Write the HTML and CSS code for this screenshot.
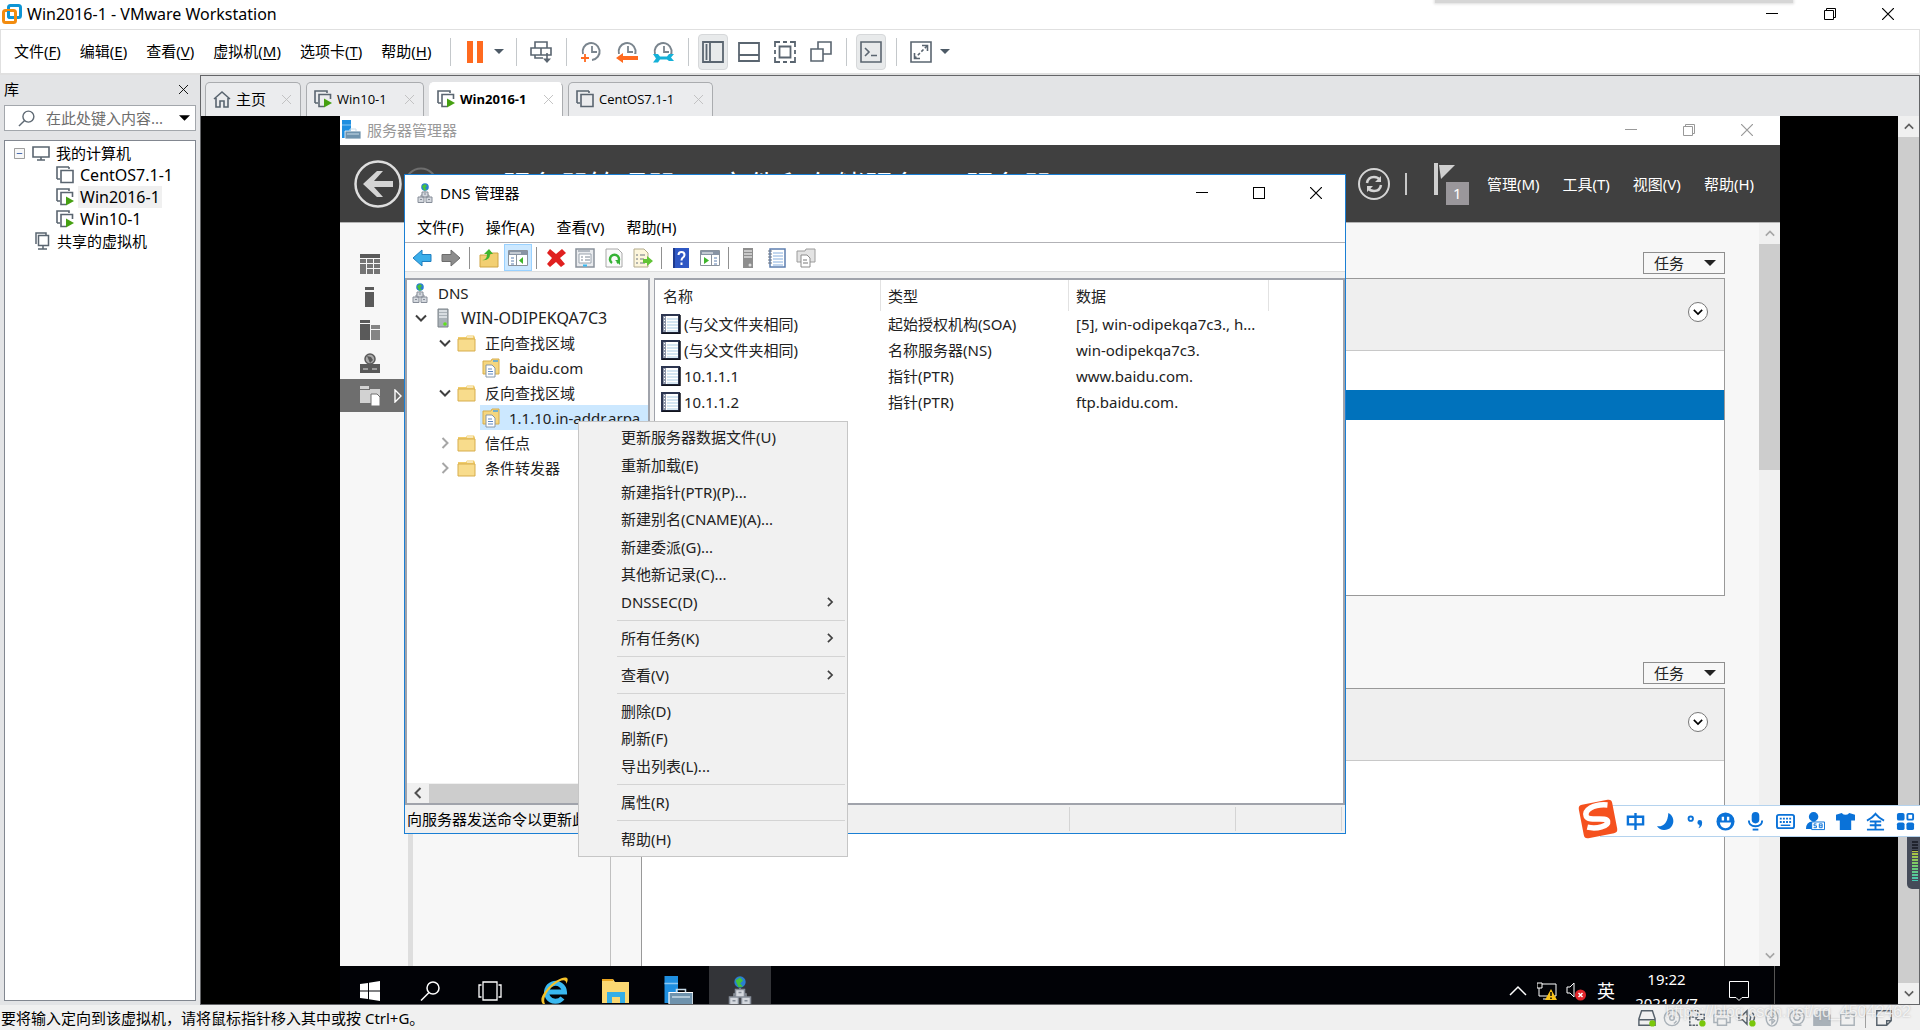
FILE: index.html
```html
<!DOCTYPE html>
<html lang="zh-CN">
<head>
<meta charset="utf-8">
<title>Win2016-1 - VMware Workstation</title>
<link rel="stylesheet" href="styles.css">
</head>
<body>
<svg class="sprite" aria-hidden="true">
  <defs>
    <symbol id="min" viewBox="0 0 12 12"><path d="M0 5.5h12" stroke="currentColor"/></symbol>
    <symbol id="max" viewBox="0 0 12 12"><rect x=".5" y=".5" width="11" height="11" fill="none" stroke="currentColor"/></symbol>
    <symbol id="restore" viewBox="0 0 12 12"><path d="M.5 2.5h9v9h-9zM2.500 2V.5h9v9H10" fill="none" stroke="currentColor"/></symbol>
    <symbol id="close" viewBox="0 0 12 12"><path d="M0 0l12 12M12 0L0 12" stroke="currentColor" stroke-width="1.200"/></symbol>
    <symbol id="down" viewBox="0 0 12 12"><path d="M1 3.500l5 5 5-5" fill="none" stroke="currentColor" stroke-width="2"/></symbol>
    <symbol id="up" viewBox="0 0 12 12"><path d="M1 8.500l5-5 5 5" fill="none" stroke="currentColor" stroke-width="2"/></symbol>
    <symbol id="left" viewBox="0 0 12 12"><path d="M8.500 1l-5 5 5 5" fill="none" stroke="currentColor" stroke-width="2"/></symbol>
    <symbol id="right" viewBox="0 0 12 12"><path d="M3.500 1l5 5-5 5" fill="none" stroke="currentColor" stroke-width="2"/></symbol>
    <symbol id="caret" viewBox="0 0 12 6"><path d="M0 0h12L6 6z" fill="currentColor"/></symbol>
    <symbol id="vm" viewBox="0 0 18 18"><path d="M1 13V1h12M1 13h3M13 1v2" fill="none" stroke="#5a6570" stroke-width="1.600"/><path d="M5 4.500h12v12H5z" fill="none" stroke="#5a6570" stroke-width="1.600"/></symbol>
    <symbol id="vmrun" viewBox="0 0 18 18"><path d="M1 13V1h12v2M1 13h3M10 16.500H5v-12h11.500V9" fill="none" stroke="#5a6570" stroke-width="1.600"/><path d="M10 8.500l8 4.500-8 4.500z" fill="#46a012"/></symbol>
    <symbol id="folder" viewBox="0 0 20 18"><path d="M1 3h8l1-1.500h7l1 2v13H1z" fill="#f1cd6b"/><path d="M1 5h17v12H1z" fill="#f8dc8c" stroke="#d7ad4c"/><path d="M10 3h6" stroke="#fff"/></symbol>
    <symbol id="zone" viewBox="0 0 20 20"><path d="M2 3h8l1-2h7v15H2z" fill="#f5d67f" stroke="#d7ad4c"/><path d="M12 3h5" stroke="#4aa3e0" stroke-width="1.500"/><path d="M5 7h6l3 3v9H5z" fill="#fff" stroke="#8797a8"/><path d="M7 11h4M7 13.500h5M7 16h5" stroke="#5c86c0"/></symbol>
    <symbol id="server" viewBox="0 0 12 20"><path d="M1 1h10v18H1z" fill="#aab2b8" stroke="#7a8288"/><path d="M2 3h8M2 6h8M2 9h8" stroke="#e8ecee" stroke-width="1.500"/><circle cx="8" cy="16" r="1.800" fill="#5fe01e"/></symbol>
    <symbol id="dns" viewBox="0 0 16 20"><circle cx="8" cy="4" r="3.800" fill="#2b7fd0"/><path d="M5 3l3-2 2 2-2 2 2 2-3 .5z" fill="#45c23a"/><path d="M8 8v4M4 14v-2h8v2" stroke="#8d949c" fill="none"/><path d="M5 9h6v5H5zM1 14h6v5.500H1zM9 14h6v5.500H9z" fill="#d4d8de" stroke="#868d98"/><path d="M7 11h2M3 16.500h2M11 16.500h2" stroke="#868d98"/></symbol>
    <symbol id="record" viewBox="0 0 20 20"><path d="M1 1h17v18H1z" fill="#fff" stroke="#2c3550" stroke-width="2"/><path d="M19 1v19M1 19.200h18" stroke="#10131c" stroke-width="1.500"/><path d="M2 2h3v16H2z" fill="#8c95a8"/><path d="M6 5h11M6 8h11M6 11h11M6 14h11M6 17h11" stroke="#a9cbe3"/><path d="M3.500 3v15" stroke="#fff" stroke-dasharray="1 2"/></symbol>
    <symbol id="srvmgr" viewBox="0 0 20 20"><path d="M1 0h9v18H1z" fill="#1f8fe0"/><path d="M1 5h9" stroke="#8cc8f2"/><path d="M4 11h16v8H4z" fill="#6f93ad" stroke="#fff" stroke-width=".8"/><path d="M9 11V9h6v2M6 14h12" stroke="#c7dbe8" fill="none"/></symbol>
    <symbol id="clock" viewBox="0 0 22 22"><path d="M3 13A8.500 8.500 0 1 1 12 19" fill="none" stroke="#7a858e" stroke-width="2"/><path d="M12 5v6h5" fill="none" stroke="#7a858e" stroke-width="1.800"/></symbol>
    <symbol id="notebook" viewBox="0 0 20 20"><path d="M3 1h15v18H3z" fill="#fff" stroke="#5d7fb0" stroke-width="1.500"/><path d="M6 5h10M6 8h10M6 11h10M6 14h10M6 17h10" stroke="#86aede"/><path d="M1 3h4M1 6h4M1 9h4M1 12h4M1 15h4" stroke="#6c7480"/></symbol>
    <symbol id="console" viewBox="0 0 20 18"><path d="M.5 1.500h19v15H.5z" fill="#fff" stroke="#8a929c"/><path d="M1 2h18v4H1z" fill="#8894a4"/><path d="M2 4h11" stroke="#fff"/></symbol>
  </defs>
</svg>

<header class="host-title">
  <svg class="logo" viewBox="0 0 20 20"><rect x="6.500" y="1.500" width="12" height="12" rx="2" fill="none" stroke="#0f95d4" stroke-width="3"/><rect x="1.500" y="6.500" width="12" height="12" rx="2" fill="none" stroke="#f28c0f" stroke-width="3"/><path d="M6.500 7v5q0 1.500 1.500 1.500h3" fill="none" stroke="#0f95d4" stroke-width="3"/></svg>
  <h1>Win2016-1 - VMware Workstation</h1>
  <div class="top-shadow"></div>
  <div class="controls">
    <button aria-label="最小化"><svg><use href="#min"/></svg></button>
    <button aria-label="还原"><svg><use href="#restore"/></svg></button>
    <button aria-label="关闭"><svg><use href="#close"/></svg></button>
  </div>
</header>

<div class="host-bar">
  <nav class="host-menu">
    <button>文件(<u>F</u>)</button><button>编辑(<u>E</u>)</button><button>查看(<u>V</u>)</button><button>虚拟机(<u>M</u>)</button><button>选项卡(<u>T</u>)</button><button>帮助(<u>H</u>)</button>
  </nav>
  <div class="group">
    <button class="tool" aria-label="挂起"><svg viewBox="0 0 22 22"><path d="M3 0h6v22H3zM13 0h6v22h-6z" fill="#ff6a1f"/></svg></button>
    <button class="drop" aria-label="电源选项"><svg><use href="#caret"/></svg></button>
  </div>
  <div class="group">
    <button class="tool" aria-label="发送按键"><svg viewBox="0 0 22 22" fill="none" stroke="#5a6570" stroke-width="1.600"><path d="M5 7V1h12v6M1 7h10v7H1zM11 7h10v7H11zM5 14v3h8M17 12v8"/><path d="M13 17.500h8l-4 4.500z" fill="#5a6570" stroke="none"/></svg></button>
  </div>
  <div class="group">
    <button class="tool" aria-label="拍摄快照"><svg viewBox="0 0 22 22"><use href="#clock"/><path d="M1 17h8M5 13v8" stroke="#ff6a1f" stroke-width="1.800"/></svg></button>
    <button class="tool" aria-label="恢复快照"><svg viewBox="0 0 22 22"><use href="#clock"/><path d="M0 13h22v9H0z" fill="#fff"/><path d="M0 17l7-5v3h15v4H7v3z" fill="#ff6a1f"/></svg></button>
    <button class="tool" aria-label="管理快照"><svg viewBox="0 0 22 22"><use href="#clock"/><path d="M0 13h22v9H0z" fill="#fff"/><path d="M1 13h5l2 2.500h7l2-2.500h5l-3 3.500 3 3.500h-5l-2-1.500H8l-2 3H1l3-4z" fill="#14b1d8"/></svg></button>
  </div>
  <div class="group">
    <button class="tool on" aria-label="显示库"><svg viewBox="0 0 22 22" fill="none" stroke="#5a6570" stroke-width="1.800"><path d="M1 1h20v20H1zM8 1v20M4.500 3v16"/></svg></button>
    <button class="tool" aria-label="缩略图栏"><svg viewBox="0 0 22 22" fill="none" stroke="#5a6570" stroke-width="1.800"><path d="M1 2h20v18H1zM1 14h20"/></svg></button>
    <button class="tool" aria-label="全屏"><svg viewBox="0 0 22 22" fill="none" stroke="#5a6570" stroke-width="1.800"><path d="M1 6V1h5M9 1h4M16 1h5v5M21 9v4M21 16v5h-5M13 21H9M6 21H1v-5M1 13V9M5.500 5.500h11v11h-11z"/></svg></button>
    <button class="tool" aria-label="Unity"><svg viewBox="0 0 22 22" fill="none" stroke="#5a6570" stroke-width="1.600"><path d="M1 8h12v12H1zM8 8V1h13v12h-8"/></svg></button>
  </div>
  <div class="group">
    <button class="tool on" aria-label="控制台"><svg viewBox="0 0 22 22" fill="none" stroke="#5a6570" stroke-width="1.600"><path d="M1 1h20v20H1zM5 7l4 4-4 4M11 14.500h6"/></svg></button>
  </div>
  <div class="group">
    <button class="tool" aria-label="拉伸"><svg viewBox="0 0 22 22" fill="none" stroke="#5a6570" stroke-width="1.600"><path d="M1 1h20v20H1zM12 4.500h5.500V10M10 17.500H4.500V12"/><path d="M17 5L5 17" stroke-dasharray="3 2"/></svg></button>
    <button class="drop" aria-label="拉伸选项"><svg><use href="#caret"/></svg></button>
  </div>
</div>

<div class="workspace">
  <aside class="library">
    <div class="library-head"><h2>库</h2><button aria-label="关闭库"><svg><use href="#close"/></svg></button></div>
    <label class="search">
      <svg viewBox="0 0 18 18"><circle cx="11" cy="7" r="5.800" fill="none" stroke="#5f6a74" stroke-width="1.500"/><path d="M7 11l-6 6" stroke="#5f6a74" stroke-width="1.500"/></svg>
      <input type="text" aria-label="搜索" placeholder="在此处键入内容...">
      <svg class="search-caret"><use href="#caret"/></svg>
    </label>
    <ul class="library-tree">
      <li class="root"><svg class="expander" viewBox="0 0 12 12"><path d="M.5.5h11v11H.5z" fill="#f7f7f7" stroke="#919191"/><path d="M3 6h6" stroke="#3a5fa8"/></svg><svg viewBox="0 0 18 18"><path d="M1 3h16v10H1z" fill="none" stroke="#5a6570" stroke-width="1.600"/><path d="M9 13v3M5 16h8" stroke="#5a6570" stroke-width="1.600"/></svg><span>我的计算机</span></li>
      <li class="leaf"><svg><use href="#vm"/></svg><span>CentOS7.1-1</span></li>
      <li class="leaf"><svg><use href="#vmrun"/></svg><span class="current">Win2016-1</span></li>
      <li class="leaf"><svg><use href="#vmrun"/></svg><span>Win10-1</span></li>
      <li class="shared"><svg viewBox="0 0 18 18" fill="none" stroke="#5a6570" stroke-width="1.500"><path d="M3 12V1h10v2M5.500 3.500h10v10h-10zM10 14v3M5 17h9"/></svg><span>共享的虚拟机</span></li>
    </ul>
  </aside>

  <main class="main">
    <div class="tabs">
      <button class="tab tab-home"><svg viewBox="0 0 18 18" fill="none" stroke="#5a6570" stroke-width="1.600"><path d="M1 9l8-7 8 7M3 8v9h4v-6h4v6h4V8"/></svg><span>主页</span><svg class="x"><use href="#close"/></svg></button>
      <button class="tab tab-small"><svg><use href="#vmrun"/></svg><span>Win10-1</span><svg class="x"><use href="#close"/></svg></button>
      <button class="tab tab-mid active"><svg><use href="#vmrun"/></svg><span>Win2016-1</span><svg class="x"><use href="#close"/></svg></button>
      <button class="tab tab-wide"><svg><use href="#vm"/></svg><span>CentOS7.1-1</span><svg class="x"><use href="#close"/></svg></button>
    </div>
    <div class="viewport">
      <section class="guest">
        <div class="sm-title"><svg class="sm-logo"><use href="#srvmgr"/></svg><span>服务器管理器</span>
          <div class="controls">
            <button aria-label="最小化"><svg><use href="#min"/></svg></button>
            <button aria-label="还原"><svg><use href="#restore"/></svg></button>
            <button aria-label="关闭"><svg><use href="#close"/></svg></button>
          </div>
        </div>
        <div class="sm-header">
          <button class="sm-back" aria-label="后退"><svg viewBox="0 0 48 48"><circle cx="24" cy="24" r="22.500" fill="none" stroke="#dedede" stroke-width="2.500"/><path d="M9 24L23 11h6L20 21h19v6H20l9 10h-6z" fill="#d4d4d4"/></svg></button>
          <button class="sm-fwd" aria-label="前进"><svg viewBox="0 0 34 34"><circle cx="17" cy="17" r="15.500" fill="none" stroke="#6e6e6e" stroke-width="2"/></svg></button>
          <div class="crumbs"><span>服务器管理器</span><span>文件和存储服务</span><span>服务器</span></div>
          <button class="sm-refresh" aria-label="刷新"><svg viewBox="0 0 32 32" fill="none" stroke="#d4d4d4"><circle cx="16" cy="16" r="15" stroke-width="2"/><path d="M9 15q1-6 7-6 4 0 6 3M23 17q-1 6-7 6-4 0-6-3" stroke-width="2.500"/><path d="M23 8v6h-6zM9 24v-6h6z" fill="#d4d4d4" stroke="none"/></svg></button>
          <span class="sm-sep"></span>
          <button class="sm-flag" aria-label="通知"><svg viewBox="0 0 22 32"><path d="M1 0h4v32H1z" fill="#cfcfcf"/><path d="M6 2h16L8 16z" fill="#cfcfcf"/></svg><b>1</b></button>
          <nav class="sm-menu"><button>管理(M)</button><button>工具(T)</button><button>视图(V)</button><button>帮助(H)</button></nav>
        </div>
        <div class="sm-body">
          <nav class="sm-nav">
            <button aria-label="仪表板"><svg viewBox="0 0 20 20" fill="#5a5a5a"><path d="M0 0h20v4H0z"/><path d="M0 5h6v4H0zM7 5h6v4H7zM14 5h6v4h-6zM0 10h6v10H0zM7 10h6v4H7zM14 10h6v4h-6zM7 15h6v5H7zM14 15h6v5h-6z" fill="#757575"/></svg></button>
            <button aria-label="本地服务器"><svg viewBox="0 0 20 20" fill="#5a5a5a"><path d="M5 0h9v3H5zM5 5h9v15H5z"/></svg></button>
            <button aria-label="所有服务器"><svg viewBox="0 0 20 20" fill="#5a5a5a"><path d="M0 0h10v3H0zM0 4h10v16H0z"/><path d="M11 5h9v4h-9zM11 10h9v10h-9z" fill="#858585"/></svg></button>
            <button aria-label="DNS"><svg viewBox="0 0 20 20" fill="#5a5a5a"><circle cx="10" cy="6" r="5" fill="#a8a8a8" stroke="#5a5a5a" stroke-width="1.500"/><path d="M7 3l4 1 2 3-3 3z"/><path d="M0 11h20v9H0z"/><path d="M3 16h5M12 16h5" stroke="#ddd"/></svg></button>
            <button class="chosen" aria-label="文件和存储服务"><svg viewBox="0 0 20 20"><path d="M0 0h9v3h11v14H0z" fill="#d2d2d2"/><path d="M0 3.500h10" stroke="#6e6e6e"/><path d="M11 8h6l3 3v9h-9z" fill="#fff" stroke="#6e6e6e"/></svg><svg class="nav-arrow" viewBox="0 0 8 14"><path d="M1 1l6 6-6 6z" fill="none" stroke="#fff" stroke-width="1.400"/></svg></button>
          </nav>
          <div class="sm-list"></div>
          <div class="sm-content">
            <button class="tasks">任务<svg><use href="#caret"/></svg></button>
            <section class="card card-servers">
              <div class="card-head"><button class="fold" aria-label="展开"><svg><use href="#down"/></svg></button></div>
              <div class="card-row"></div>
            </section>
            <button class="tasks">任务<svg><use href="#caret"/></svg></button>
            <section class="card card-events">
              <div class="card-head"><button class="fold" aria-label="展开"><svg><use href="#down"/></svg></button></div>
            </section>
          </div>
          <div class="vscroll inner"><svg><use href="#up"/></svg><i></i><svg><use href="#down"/></svg></div>
        </div>
        <footer class="taskbar">
          <button class="sys" aria-label="开始"><svg viewBox="0 0 20 20" fill="#fff"><path d="M0 3l8-1v7.500H0zM9 1.800L20 0v9.500H9zM0 10.500h8V18l-8-1zM9 10.500h11V20L9 18.200z"/></svg></button>
          <button class="sys" aria-label="搜索"><svg viewBox="0 0 20 20" fill="none" stroke="#fff" stroke-width="1.500"><circle cx="13" cy="7" r="6"/><path d="M9 11.500L1 19.500"/></svg></button>
          <button class="sys" aria-label="任务视图"><svg class="tv" viewBox="0 0 24 20" fill="none" stroke="#fff" stroke-width="1.300"><path d="M5 1h14v18H5zM3.500 4H1v12h2.500M20.500 4H23v12h-2.500"/></svg></button>
          <button class="app" aria-label="Internet Explorer"><svg viewBox="0 0 30 30"><path d="M23.500 22a9 9 0 1 1 2-6H9" fill="none" stroke="#39b8f0" stroke-width="5"/><path d="M4 28C-4 21 20-2 28 2c2 2-1 6-1 6 1-6-6-4-12 1S3 22 6 28z" fill="#f4c22a"/></svg></button>
          <button class="app" aria-label="文件资源管理器"><svg viewBox="0 0 30 30"><path d="M1 3h11l2 3h14v21H1z" fill="#fbd872"/><path d="M1 4h11" stroke="#e9a51f" stroke-width="2"/><path d="M6 27V16h18v11h-5v-6h-8v6z" fill="#35aee6"/></svg></button>
          <button class="app" aria-label="服务器管理器"><svg><use href="#srvmgr"/></svg></button>
          <button class="app running" aria-label="DNS 管理器"><svg><use href="#dns"/></svg></button>
          <div class="tray">
            <svg viewBox="0 0 20 20" fill="none" stroke="#fff" stroke-width="1.500"><path d="M2 14l8-8 8 8"/></svg>
            <svg viewBox="0 0 20 20"><path d="M2 3h17v12H2zM6 18h8" fill="none" stroke="#fff"/><path d="M0 2h5v5H0z" fill="#000" stroke="#fff"/><path d="M14 8l6 11H8z" fill="#fcc419"/><path d="M14 11v4M14 16.500v1.500" stroke="#000" stroke-width="1.500"/></svg>
            <svg viewBox="0 0 20 20"><path d="M1 6h3l4-4v14l-4-4H1z" fill="none" stroke="#fff"/><circle cx="14.500" cy="14" r="5.500" fill="#e0262c"/><path d="M12.500 12l4 4M16.500 12l-4 4" stroke="#fff" stroke-width="1.500"/></svg>
            <span class="ime">英</span>
            <time class="clock"><span>19:22</span><span>2021/4/7</span></time>
            <svg viewBox="0 0 20 20"><path d="M.5.5h19v16H13l-3 3-3-3H.5z" fill="none" stroke="#fff"/></svg>
          </div>
        </footer>

        <section class="dns">
          <div class="dns-title"><svg class="dns-icon"><use href="#dns"/></svg><h2>DNS 管理器</h2>
            <div class="controls">
              <button aria-label="最小化"><svg><use href="#min"/></svg></button>
              <button aria-label="最大化"><svg><use href="#max"/></svg></button>
              <button aria-label="关闭"><svg><use href="#close"/></svg></button>
            </div>
          </div>
          <nav class="dns-menu"><button>文件(F)</button><button>操作(A)</button><button>查看(V)</button><button>帮助(H)</button></nav>
          <div class="dns-tools">
            <button aria-label="后退"><svg viewBox="0 0 20 18"><path d="M1 9l9-8v4.500h9v7h-9V17z" fill="#3aaeea" stroke="#1f7fc0"/></svg></button>
            <button aria-label="前进"><svg viewBox="0 0 20 18"><path d="M19 9l-9-8v4.500H1v7h9V17z" fill="#8c8c8c" stroke="#6c6c6c"/></svg></button>
            <span></span>
            <button aria-label="上移"><svg viewBox="0 0 20 20"><path d="M1 7h10l1-2h7v14H1z" fill="#f2cf72" stroke="#cfa445"/><path d="M3 12q5 0 5-6H5l5-5 4 5h-3q0 7-8 6z" fill="#3fb52c"/></svg></button>
            <button class="on" aria-label="显示控制台树"><svg viewBox="0 0 20 18"><use href="#console"/><path d="M3 9h3M3 12h3M3 15h3" stroke="#5d7fb0"/><path d="M8.500 6v11" stroke="#8a929c"/><path d="M15 8v7l-4-3.500z" fill="#3fb52c"/></svg></button>
            <span></span>
            <button aria-label="删除"><svg viewBox="0 0 20 20"><path d="M4 1l6 5 6-5 4 4-6 5 5 6-4 3-5-5-6 5-3-3 5-6-5-5z" fill="#e0201f"/></svg></button>
            <button aria-label="属性"><svg viewBox="0 0 20 20"><path d="M1 1h18v18H1z" fill="#e9ebee" stroke="#8a929c" stroke-width="1.500"/><path d="M4 6h12v9H4z" fill="#fff" stroke="#9aa3ad"/><path d="M3 3h12M6 9h2M10 9h5M6 12h2M10 12h5" stroke="#7d8793"/><path d="M8 17.500h4" stroke="#39b8f0" stroke-width="2"/></svg></button>
            <button aria-label="刷新"><svg viewBox="0 0 20 20"><path d="M2 1h12l4 4v14H2z" fill="#fafafa" stroke="#a8a8a8"/><path d="M8 15a4.500 4.500 0 1 1 5 0" fill="none" stroke="#35b235" stroke-width="2.500"/><path d="M11 12h5v5z" fill="#35b235"/></svg></button>
            <button aria-label="导出列表"><svg viewBox="0 0 20 20"><path d="M1 1h10l4 4v14H1z" fill="#fdf6dc" stroke="#b3ab8c"/><path d="M3 7h2M7 7h5M3 11h2M7 11h4M3 15h2M7 15h5" stroke="#6c7480"/><path d="M10 11h4V8l6 5-6 5v-3h-4z" fill="#62c436"/></svg></button>
            <span></span>
            <button aria-label="帮助"><svg viewBox="0 0 20 20"><path d="M2 0h16v20H2z" fill="#2e57c4"/><path d="M3 0v20" stroke="#1e3a8e" stroke-width="2"/><path d="M7.500 7q0-3 3-3t3 3q0 1.500-2 3-1 1-1 2.500M10.500 14.500V17" fill="none" stroke="#fff" stroke-width="2"/></svg></button>
            <button aria-label="操作窗格"><svg viewBox="0 0 20 18"><use href="#console"/><path d="M14 9h3M14 12h3M14 15h3" stroke="#5d7fb0"/><path d="M11.500 6v11" stroke="#8a929c"/><path d="M4 8v7l5-3.500z" fill="#3fb52c"/></svg></button>
            <span></span>
            <button aria-label="新建服务器"><svg viewBox="0 0 20 20"><path d="M5 0h10v20H5z" fill="#8e8e8e"/><path d="M6 3h8M6 6h8M6 9h8" stroke="#ddd" stroke-width="1.500"/><circle cx="12" cy="17" r="1.500" fill="#ddd"/></svg></button>
            <button aria-label="新建记录"><svg><use href="#notebook"/></svg></button>
            <button aria-label="新建区域"><svg viewBox="0 0 20 20"><path d="M1 3h8l1-2h9v13H1z" fill="#e3e3e3" stroke="#9c9c9c"/><path d="M5 7h6l3 3v9H5z" fill="#fff" stroke="#8c8c8c"/><path d="M7 12h4M7 15h5" stroke="#777"/></svg></button>
          </div>
          <div class="dns-panes">
            <div class="dns-tree">
              <ul>
                <li class="lv0"><svg><use href="#dns"/></svg>DNS</li>
                <li class="lv1"><svg class="tw"><use href="#down"/></svg><svg><use href="#server"/></svg>WIN-ODIPEKQA7C3</li>
                <li class="lv2"><svg class="tw"><use href="#down"/></svg><svg><use href="#folder"/></svg>正向查找区域</li>
                <li class="lv3"><svg><use href="#zone"/></svg>baidu.com</li>
                <li class="lv2"><svg class="tw"><use href="#down"/></svg><svg><use href="#folder"/></svg>反向查找区域</li>
                <li class="lv3 picked"><svg><use href="#zone"/></svg>1.1.10.in-addr.arpa</li>
                <li class="lv2"><svg class="tw off"><use href="#right"/></svg><svg><use href="#folder"/></svg>信任点</li>
                <li class="lv2"><svg class="tw off"><use href="#right"/></svg><svg><use href="#folder"/></svg>条件转发器</li>
              </ul>
              <div class="hscroll"><svg><use href="#left"/></svg><i></i></div>
            </div>
            <div class="dns-list">
              <table>
                <thead><tr><th class="c-name">名称</th><th class="c-type">类型</th><th class="c-data">数据</th><th></th></tr></thead>
                <tbody>
                  <tr><td class="rec"><svg><use href="#record"/></svg>(与父文件夹相同)</td><td>起始授权机构(SOA)</td><td>[5], win-odipekqa7c3., h...</td><td></td></tr>
                  <tr><td class="rec"><svg><use href="#record"/></svg>(与父文件夹相同)</td><td>名称服务器(NS)</td><td>win-odipekqa7c3.</td><td></td></tr>
                  <tr><td class="rec"><svg><use href="#record"/></svg>10.1.1.1</td><td>指针(PTR)</td><td>www.baidu.com.</td><td></td></tr>
                  <tr><td class="rec"><svg><use href="#record"/></svg>10.1.1.2</td><td>指针(PTR)</td><td>ftp.baidu.com.</td><td></td></tr>
                </tbody>
              </table>
            </div>
          </div>
          <div class="dns-status"><span class="s1">向服务器发送命令以更新此</span><span class="s2"></span><span class="s3"></span></div>
        </section>

        <div class="context" role="menu">
          <button>更新服务器数据文件(U)</button>
          <button>重新加载(E)</button>
          <button>新建指针(PTR)(P)...</button>
          <button>新建别名(CNAME)(A)...</button>
          <button>新建委派(G)...</button>
          <button>其他新记录(C)...</button>
          <button>DNSSEC(D)<svg><use href="#right"/></svg></button>
          <hr>
          <button>所有任务(K)<svg><use href="#right"/></svg></button>
          <hr>
          <button>查看(V)<svg><use href="#right"/></svg></button>
          <hr>
          <button>删除(D)</button>
          <button>刷新(F)</button>
          <button>导出列表(L)...</button>
          <hr>
          <button>属性(R)</button>
          <hr>
          <button>帮助(H)</button>
        </div>
      </section>
      <div class="vscroll outer"><svg><use href="#up"/></svg><i></i><svg><use href="#down"/></svg></div>
    </div>
  </main>
</div>

<footer class="host-status">
  <p>要将输入定向到该虚拟机，请将鼠标指针移入其中或按 Ctrl+G。</p>
  <div class="devices">
    <svg class="live" viewBox="0 0 20 20"><path d="M4 2h12l3 9v7H1v-7zM1 12h18"/><circle cx="16" cy="16" r="3.500"/></svg>
    <svg viewBox="0 0 20 20"><circle cx="10" cy="10" r="8.500"/><circle cx="10" cy="10" r="2.500"/><path d="M5 7q1-2 3-3M15 13q-1 2-3 3"/></svg>
    <svg class="live" viewBox="0 0 20 20"><path d="M2 2h9v7H2zM9 9v3h9V6h-7M2 9v9h9" stroke-dasharray="3 1"/><circle cx="16" cy="16" r="3.500"/></svg>
    <svg viewBox="0 0 20 20"><path d="M5 6V2h10v4M1 6h18v9h-4M5 15H1V6M5 11h10v7H5z"/></svg>
    <svg class="live" viewBox="0 0 20 20"><path d="M1 7h4l5-5v15l-5-5H1zM13 6q2 3 0 7M16 4q4 5 1 9"/><circle cx="16" cy="16" r="3.500"/></svg>
    <svg viewBox="0 0 20 20"><ellipse cx="10" cy="10" rx="6.500" ry="9"/><path d="M7 7l6 6-3 3V4l3 3-6 6"/></svg>
    <svg viewBox="0 0 20 20"><circle cx="10" cy="9" r="8"/><circle cx="10" cy="9" r="3.500"/><path d="M5 18h10"/></svg>
    <svg viewBox="0 0 20 20"><path d="M1 7h5V3h10v4h3v11H1z" fill="#a9b1b8"/></svg>
    <svg viewBox="0 0 20 20"><path d="M3 6h15v12H3zM8 6V2h5M8 10h5"/></svg>
    <i></i>
    <svg class="note" viewBox="0 0 20 20"><path d="M2 2h16v11l-5 5H2zM18 13h-5v5"/></svg>
  </div>
  <p class="watermark">https://blog.csdn.net/qq_45042462</p>
</footer>

<div class="gauge"><i></i></div>
<div class="ime-bar">
  <svg class="ime-logo" viewBox="0 0 40 40"><g transform="rotate(-11 20 20)"><rect x="3" y="3" width="34" height="34" rx="4" fill="#f5511e"/><path d="M32 8C18 4 8 9 9 15s20 4 20 9-12 6-21 2" fill="none" stroke="#fff" stroke-width="5.500"/></g></svg>
  <button aria-label="中文"><svg viewBox="0 0 20 20"><path d="M2 5h16v8H2zM10 1v18" fill="none" stroke="#0a72d8" stroke-width="2.500"/></svg></button>
  <button aria-label="夜间"><svg viewBox="0 0 20 20"><path d="M13 1a9.500 9.500 0 1 1-12 14q11 1 12-14z" fill="#0a72d8"/></svg></button>
  <button aria-label="标点"><svg viewBox="0 0 20 20"><circle cx="5" cy="7" r="2.300" fill="none" stroke="#0a72d8" stroke-width="2"/><path d="M12 11a2.500 2.500 0 1 1 5 0q0 5-4 6 2-2 1-3.500-2 0-2-2.500z" fill="#0a72d8"/></svg></button>
  <button aria-label="表情"><svg viewBox="0 0 20 20"><circle cx="10" cy="10" r="9.500" fill="#0a72d8"/><path d="M6 5h2.500v4H6zM11.500 5H14v4h-2.500zM4 11h12q-1 6-6 6t-6-6z" fill="#fff"/></svg></button>
  <button aria-label="语音"><svg viewBox="0 0 20 20"><rect x="6" y="0" width="8" height="12" rx="4" fill="#0a72d8"/><path d="M3 9q0 6 7 6t7-6" fill="none" stroke="#0a72d8" stroke-width="2"/><path d="M7 17.500h6v2H7z" fill="#0a72d8"/></svg></button>
  <button aria-label="键盘"><svg viewBox="0 0 20 20"><rect x="1" y="3" width="18" height="14" rx="2" fill="none" stroke="#0a72d8" stroke-width="2"/><path d="M4 7h12M4 10.500h12" stroke="#0a72d8" stroke-width="2" stroke-dasharray="2 1.300"/><path d="M5 14h10" stroke="#0a72d8" stroke-width="1.500"/></svg></button>
  <button aria-label="账户"><svg viewBox="0 0 20 20"><circle cx="8" cy="5" r="5" fill="#0a72d8"/><path d="M0 18q0-8 7-8h3v8z" fill="#0a72d8"/><path d="M6 10.500h13.500v8H6z" fill="#fff" stroke="#0a72d8"/><path d="M11 12.500H8.500v2H11v2H8M14 12.500h3v4h-3zM14 14.500h3" fill="none" stroke="#0a72d8"/></svg></button>
  <button aria-label="皮肤"><svg viewBox="0 0 20 20"><path d="M0 3l6-2q4 4 8 0l6 2v6h-4v10H4V9H0z" fill="#0a72d8"/></svg></button>
  <button aria-label="全角"><svg viewBox="0 0 20 20"><path d="M1 9q6-3 9-7 3 4 9 7M4 10h12M4 14h12M1 18.500h18M10 9v9" fill="none" stroke="#0a72d8" stroke-width="2"/></svg></button>
  <button aria-label="工具箱"><svg viewBox="0 0 20 20"><g fill="#0a72d8"><rect x="1" y="1" width="8" height="8" rx="2"/><rect x="1" y="11" width="8" height="8" rx="2"/><rect x="11" y="11" width="8" height="8" rx="2"/></g><rect x="12" y="2" width="6" height="6" rx="1" fill="none" stroke="#0a72d8" stroke-width="2"/></svg></button>
</div>
</body>
</html>
```
FILE: styles.css
```css
* { box-sizing: border-box; }
body {
  margin: 0;
  height: 100vh;
  display: flex;
  flex-direction: column;
  position: relative;
  overflow: hidden;
  background: #e3e4e6;
  color: #000;
  font: 15px/20px "Noto Sans", "Noto Sans CJK SC", sans-serif;
}
h1, h2, p, ul { margin: 0; padding: 0; font: inherit; list-style: none; }
svg { display: block; flex: none; }
button {
  margin: 0;
  padding: 0;
  border: 0;
  background: none;
  color: inherit;
  font: inherit;
  white-space: nowrap;
  display: flex;
  align-items: center;
  justify-content: center;
  flex: none;
}
.sprite { position: absolute; width: 0; height: 0; }
.controls { display: flex; margin-left: auto; align-self: stretch; }
.controls button { width: 58px; }
.controls svg { width: 12px; height: 12px; }

/* host window */
.host-title {
  height: 29px;
  flex: none;
  display: flex;
  align-items: center;
  padding: 0 3px 2px 2px;
  background: #fff;
  position: relative;
  font-size: 16px;
}
.logo { width: 20px; height: 20px; margin-right: 5px; }
.top-shadow {
  position: absolute;
  top: 0;
  right: 127px;
  width: 358px;
  height: 3px;
  background: #d6d6d6;
  box-shadow: 0 0 3px 1px #dcdcdc;
}
.host-bar {
  height: 46px;
  flex: none;
  display: flex;
  align-items: center;
  background: #fff;
  border: 1px solid #e0e0e0;
  border-bottom-width: 2px;
}
.host-menu { width: 449px; display: flex; gap: 19px; padding: 0 0 2px 13px; flex: none; }
.host-menu u { text-underline-offset: 2px; }
.group {
  display: flex;
  align-items: center;
  gap: 6px;
  height: 28px;
  padding: 0 10px 0 9px;
  border-left: 1px solid #c4c8cb;
}
.tool { width: 30px; height: 36px; border-radius: 4px; }
.tool svg { width: 22px; height: 22px; }
.tool.on { background: #e8eaeb; border: 1px solid #d6d8da; }
.drop { width: 14px; height: 28px; margin-left: -4px; color: #4d5a66; }
.drop svg { width: 10px; height: 5px; }

.workspace { flex: 1; display: flex; min-height: 0; }
.library { width: 200px; flex: none; display: flex; flex-direction: column; padding: 0 4px 4px; }
.library-head { height: 30px; display: flex; align-items: center; justify-content: space-between; padding-bottom: 2px; }
.library-head button { width: 25px; height: 24px; }
.library-head svg { width: 9px; height: 9px; }
.search {
  height: 26px;
  display: flex;
  align-items: center;
  background: #fff;
  border: 1px solid #a3a7ac;
  padding: 0 5px 0 13px;
}
.search svg { width: 17px; height: 17px; }
.search input {
  flex: 1;
  min-width: 0;
  border: 0;
  padding: 0 0 0 11px;
  background: none;
  font: inherit;
}
.search input::placeholder { color: #6d6d6d; opacity: 1; }
.search .search-caret { width: 11px; height: 6px; }
.library-tree {
  flex: 1;
  margin-top: 9px;
  padding-top: 1px;
  background: #fff;
  border: 1px solid #828790;
}
.library-tree li { height: 22px; display: flex; align-items: center; gap: 4px; }
.library-tree svg { width: 18px; height: 18px; }
.library-tree .expander { width: 11px; height: 11px; margin-right: 3px; }
.library-tree .root { padding-left: 9px; }
.library-tree .leaf { padding-left: 51px; font-size: 16px; }
.library-tree .shared { padding-left: 28px; }
.library-tree span { padding: 0 2px; line-height: 22px; }
.library-tree .current { background: #f0f0f0; }

.main {
  flex: 1;
  min-width: 0;
  display: flex;
  flex-direction: column;
  border: 1px solid #646568;
}
.tabs { height: 40px; flex: none; display: flex; align-items: flex-end; gap: 5px; padding-left: 4px; }
.tab {
  height: 34px;
  justify-content: flex-start;
  gap: 5px;
  padding: 0 9px 1px 7px;
  border: 1px solid #aaacaf;
  border-bottom: 0;
  border-radius: 5px 5px 0 0;
  background: #ebecee;
  font-family: "Open Sans", "Noto Sans CJK SC", sans-serif;
  font-size: 13px;
}
.tab svg { width: 18px; height: 18px; }
.tab .x { width: 9px; height: 9px; margin-left: auto; color: #bdbdbd; }
.tab.active { background: #fff; border-color: #fff #aaacaf #fff #fff; font-weight: 700; }
.tab-home { width: 96px; font-size: 15px; }
.tab-small { width: 118px; }
.tab-mid { width: 134px; }
.tab-wide { width: 145px; }
.viewport { flex: 1; min-height: 0; display: flex; background: #000; }

.vscroll { display: flex; flex-direction: column; align-items: center; background: #f0f0f0; flex: none; }
.vscroll svg { width: 10px; height: 21px; color: #5f5f5f; }
.vscroll i { width: 100%; background: #cdcdcd; }
.outer { width: 21px; }
.outer i { flex: 1; }
.inner { width: 21px; justify-content: space-between; }
.inner svg { color: #a6a6a6; }
.inner i { height: 226px; margin-bottom: auto; }

/* guest desktop */
.guest {
  flex: 1;
  min-width: 0;
  margin: 0 118px 0 139px;
  position: relative;
  overflow: hidden;
  display: flex;
  flex-direction: column;
  background: #f7f7f7;
}
.sm-title {
  height: 29px;
  flex: none;
  display: flex;
  align-items: center;
  gap: 6px;
  padding: 0 4px 2px 1px;
  background: #fff;
  color: #999;
}
.sm-logo { width: 20px; height: 20px; }
.sm-header {
  height: 78px;
  flex: none;
  display: flex;
  align-items: center;
  padding: 0 26px 0 14px;
  background: #404040;
  border-bottom: 1px solid #b4b4b4;
  color: #fff;
}
.sm-back svg { width: 48px; height: 48px; }
.sm-fwd { margin-left: 2px; }
.sm-fwd svg { width: 34px; height: 34px; }
.crumbs { display: flex; gap: 43px; margin-left: 64px; padding-top: 4px; font-size: 29px; line-height: 40px; white-space: nowrap; }
.sm-refresh { margin-left: auto; }
.sm-refresh svg { width: 32px; height: 32px; }
.sm-sep { width: 2px; height: 22px; margin: 0 26px 0 15px; background: #c8c8c8; }
.sm-flag { position: relative; width: 36px; height: 42px; align-items: flex-start; justify-content: flex-start; }
.sm-flag svg { width: 22px; height: 32px; }
.sm-flag b {
  position: absolute;
  right: 0;
  bottom: 0;
  width: 23px;
  height: 23px;
  background: #9a979b;
  font-weight: 400;
  line-height: 23px;
}
.sm-menu { display: flex; gap: 23px; margin-left: 18px; }
.sm-body { flex: 1; min-height: 0; display: flex; }
.sm-nav { width: 73px; flex: none; padding-top: 24px; border-right: 5px solid #dedede; }
.sm-nav button { width: 100%; height: 33px; justify-content: flex-start; gap: 14px; padding-left: 20px; }
.sm-nav svg { width: 20px; height: 20px; }
.sm-nav .chosen { background: #6e6e6e; }
.sm-nav .nav-arrow { width: 8px; height: 14px; }
.sm-list { width: 198px; flex: none; border-right: 1px solid #c0c0c0; }
.sm-content {
  flex: 1;
  min-width: 0;
  padding: 29px 34px 0 30px;
  display: flex;
  flex-direction: column;
  align-items: flex-end;
}
.tasks {
  width: 82px;
  height: 22px;
  gap: 20px;
  padding-left: 2px;
  border: 1px solid #8e8e8e;
  color: #222;
}
.tasks svg { width: 12px; height: 6px; }
.card { align-self: stretch; margin-top: 4px; border: 1px solid #999; background: #fff; }
.card-head {
  height: 72px;
  display: flex;
  align-items: center;
  justify-content: flex-end;
  padding: 0 16px 6px 0;
  background: #efefef;
  border-bottom: 1px solid #c8c8c8;
}
.fold { width: 20px; height: 20px; border: 1px solid #777; border-radius: 50%; background: #fff; }
.fold svg { width: 10px; height: 10px; }
.card-servers { height: 318px; flex: none; margin-bottom: 66px; }
.card-row { height: 30px; margin-top: 39px; background: #0072bc; }
.card-events { flex: 1; border-bottom: 0; }

.taskbar {
  height: 50px;
  flex: none;
  margin-bottom: -12px;
  display: flex;
  background: #010206;
  color: #fff;
}
.sys { width: 60px; }
.sys svg { width: 20px; height: 20px; }
.sys .tv { width: 24px; }
.sys + .app { margin-left: 3px; }
.app { width: 62px; }
.app svg { width: 30px; height: 30px; }
.running { background: #333438; }
.tray {
  margin: 0 5px 0 auto;
  padding-right: 25px;
  display: flex;
  align-items: center;
  gap: 9px;
  border-right: 1px solid #555;
}
.tray svg { width: 20px; height: 20px; }
.ime { font-size: 18px; margin-left: 2px; }
.clock { width: 96px; display: flex; flex-direction: column; align-items: center; gap: 4px; padding-right: 11px; }

/* DNS manager window */
.dns {
  position: absolute;
  left: 64px;
  top: 58px;
  width: 942px;
  height: 660px;
  display: flex;
  flex-direction: column;
  background: #fff;
  border: 1px solid #1a7fd4;
}
.dns-title { height: 36px; flex: none; display: flex; align-items: center; gap: 6px; padding: 0 1px 0 11px; }
.dns-title .controls button { width: 57px; }
.dns-icon { width: 18px; height: 20px; }
.dns-menu { height: 32px; flex: none; display: flex; align-items: center; gap: 22px; padding-left: 12px; border-bottom: 1px solid #b2b2b6; }
.dns-tools { height: 29px; flex: none; display: flex; align-items: center; gap: 1px; padding: 1px 0 0 3px; border-bottom: 1px solid #dedede; }
.dns-tools button { width: 28px; height: 27px; }
.dns-tools .on { background: #cce8ff; border: 1px solid #99d1ff; }
.dns-tools span { width: 1px; height: 22px; margin: 0 4px 0 3px; background: #909090; }
.dns-tools svg { width: 20px; height: 20px; }
.dns-panes { flex: 1; min-height: 0; display: flex; gap: 4px; padding-top: 6px; background: #f0f0f0; }
.dns-tree {
  width: 245px;
  flex: none;
  display: flex;
  flex-direction: column;
  justify-content: space-between;
  background: #fff;
  border: 2px solid #a0a3ab;
}
.dns-tree li { height: 25px; display: flex; align-items: center; gap: 8px; white-space: nowrap; overflow: hidden; color: #222; }
.dns-tree li svg { width: 20px; height: 20px; }
.dns-tree li .tw { width: 12px; height: 12px; margin-right: -2px; color: #404040; }
.dns-tree li .off { color: #a6a6a6; }
.dns-tree .lv0 { padding-left: 3px; }
.dns-tree .lv1 { padding-left: 8px; font-size: 16px; }
.dns-tree .lv2 { padding-left: 32px; }
.dns-tree .lv3 { margin-left: 73px; padding-left: 1px; }
.dns-tree .picked { background: #cce8ff; }
.hscroll { height: 20px; display: flex; align-items: center; background: #f0f0f0; gap: 5px; padding-left: 5px; }
.hscroll svg { width: 12px; height: 12px; color: #505050; }
.hscroll i { flex: 1; height: 19px; background: #cdcdcd; }
.dns-list { flex: 1; background: #fff; border: 2px solid #a0a3ab; border-left-width: 1px; }
.dns-list table { width: 100%; table-layout: fixed; border-collapse: separate; border-spacing: 0; color: #222; }
.dns-list th { height: 31px; padding: 0 0 0 7px; text-align: left; font-weight: 400; border-right: 1px solid #e2e2e2; }
.dns-list th:last-child { border: 0; }
.dns-list .c-name { width: 226px; padding-left: 8px; }
.dns-list .c-type { width: 188px; }
.dns-list .c-data { width: 200px; }
.dns-list td { height: 26px; padding: 0 0 0 7px; white-space: nowrap; }
.dns-list .rec { display: flex; align-items: center; gap: 3px; padding-left: 6px; }
.dns-list .rec svg { width: 20px; height: 20px; }
.dns-status { height: 28px; flex: none; display: flex; padding: 2px 3px 2px 2px; background: #f0f0f0; }
.dns-status span { border-right: 1px solid #d4d4d4; line-height: 24px; white-space: nowrap; }
.dns-status .s1 { flex: 1; }
.dns-status .s2 { width: 166px; }
.dns-status .s3 { width: 106px; }

.context {
  position: absolute;
  left: 238px;
  top: 305px;
  width: 270px;
  height: 436px;
  display: flex;
  flex-direction: column;
  padding: 2px 2px 3px;
  background: #f1f1f1;
  border: 1px solid #c6c6c6;
  color: #222;
}
.context button { flex: 1; justify-content: space-between; padding: 0 9px 1px 40px; }
.context svg { width: 12px; height: 10px; color: #404040; }
.context hr { width: 228px; height: 1px; margin: 4px 0 4px auto; border: 0; background: #d4d4d4; flex: none; }

/* host status bar */
.host-status {
  height: 25px;
  flex: none;
  display: flex;
  align-items: center;
  justify-content: space-between;
  padding: 0 26px 0 1px;
  position: relative;
  background: #f0f0f0;
}
.devices { display: flex; align-items: center; gap: 5px; }
.devices svg { width: 20px; height: 18px; fill: none; stroke: #a9b1b8; stroke-width: 1.6px; }
.devices .live, .devices .note { stroke: #56616b; }
.devices .live circle { fill: #7ac70c; stroke: none; }
.devices i { width: 1px; height: 20px; margin: 0 3px; background: #a0a0a0; }
.watermark {
  position: absolute;
  right: 9px;
  top: -3px;
  color: rgba(255, 255, 255, .75);
  text-shadow: 0 0 2px rgba(120, 120, 120, .5);
  font: 16px/20px "Liberation Sans", sans-serif;
}

/* overlays of the host desktop */
.gauge {
  position: absolute;
  right: 0;
  top: 830px;
  width: 13px;
  height: 59px;
  padding: 11px 2px 8px 5px;
  border-radius: 5px 0 0 5px;
  background: #454b59;
}
.gauge i {
  display: block;
  height: 100%;
  background:
    repeating-linear-gradient(transparent 0 2px, #454b59 2px 3px),
    linear-gradient(#20242e 10px, #b4c23a 10px, #6fd072 26px, #45c5b5);
}
.ime-bar {
  position: absolute;
  right: 0;
  top: 805px;
  height: 32px;
  display: flex;
  align-items: center;
  background: #fff;
  border: 1px solid #b5d3ee;
  border-right: 0;
}
.ime-logo { width: 40px; height: 40px; margin: -4px 2px 0 -23px; }
.ime-bar button { width: 30px; height: 30px; }
.ime-bar button svg { width: 19px; height: 19px; }
```
